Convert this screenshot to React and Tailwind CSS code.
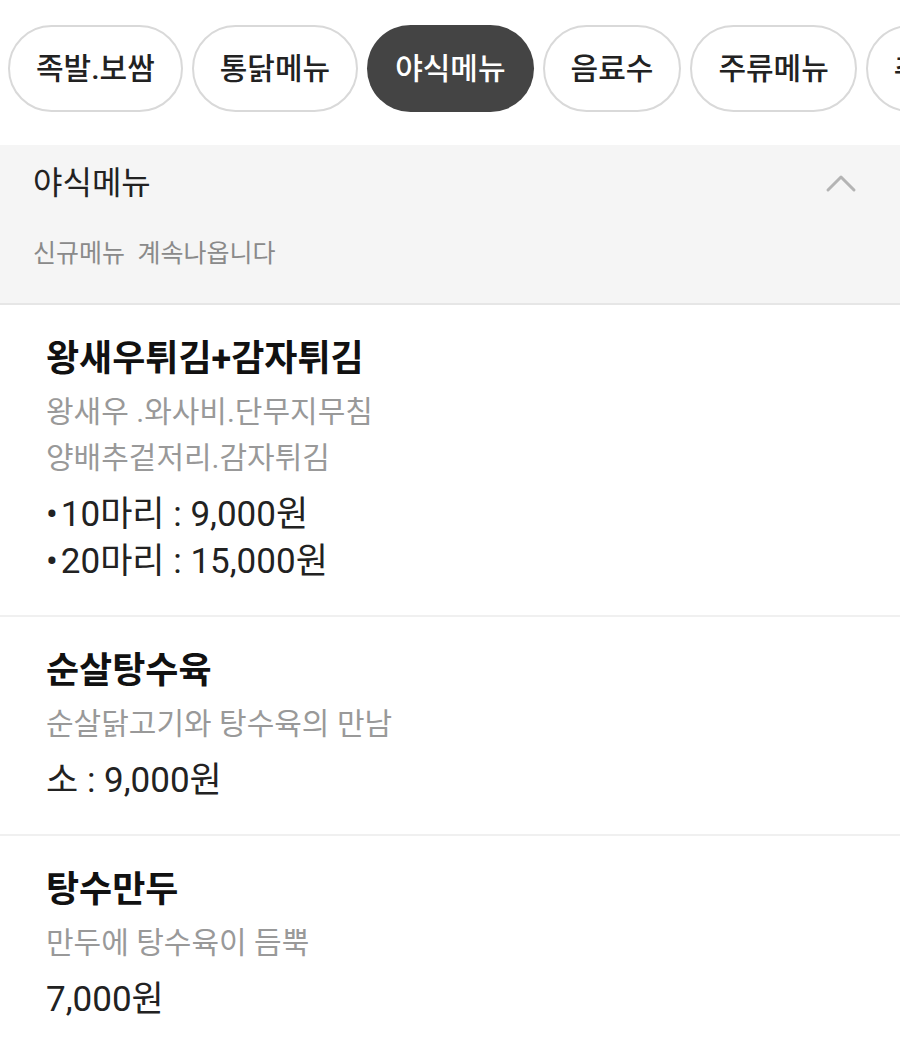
import React from "react";

const font = { fontFamily: "Roboto, 'Noto Sans CJK KR', 'Noto Sans', sans-serif" };

const tabs = ["족발.보쌈", "통닭메뉴", "야식메뉴", "음료수", "주류메뉴", "추가메뉴"];

const items = [
  {
    title: "왕새우튀김+감자튀김",
    desc: ["왕새우 .와사비.단무지무침", "양배추겉저리.감자튀김"],
    prices: [
      { bullet: true, text: "10마리 : 9,000원" },
      { bullet: true, text: "20마리 : 15,000원" },
    ],
  },
  {
    title: "순살탕수육",
    desc: ["순살닭고기와 탕수육의 만남"],
    prices: [{ bullet: false, text: "소 : 9,000원" }],
  },
  {
    title: "탕수만두",
    desc: ["만두에 탕수육이 듬뿍"],
    prices: [{ bullet: false, text: "7,000원" }],
  },
];

export default function App() {
  return (
    <div className="w-[900px] h-[1044px] overflow-hidden bg-white" style={font}>
      <div className="flex gap-[9px] pl-[8px] pt-[25px] pb-[33px] overflow-hidden whitespace-nowrap">
        {tabs.map((t, i) => (
          <div
            key={t}
            className={
              i === 2
                ? "shrink-0 h-[87px] flex items-center px-[28px] rounded-full bg-[#444444] text-white text-[30px] font-medium"
                : "shrink-0 h-[87px] flex items-center px-[26px] rounded-full border-2 border-[#d9d9d9] bg-white text-[#222] text-[30px] font-medium"
            }
          >
            {t}
          </div>
        ))}
      </div>

      <div className="bg-[#f5f5f5] border-b-2 border-[#e6e6e6] pl-[33px] pr-[43px] pt-[20px] pb-[34px]">
        <div className="flex items-center justify-between h-[36px]">
          <span className="text-[32px] leading-[36px] text-[#222]">야식메뉴</span>
          <svg width="32" height="20" viewBox="0 0 32 20" fill="none">
            <polyline points="3,17 16,4 29,17" stroke="#b4b4b4" strokeWidth="3" strokeLinecap="round" strokeLinejoin="round" />
          </svg>
        </div>
        <div className="mt-[38px] text-[25px] leading-[30px] text-[#8a8a8a] whitespace-pre">신규메뉴  계속나옵니다</div>
      </div>

      {items.map((it) => (
        <div key={it.title} className="pl-[46px] pr-[30px] pt-[32px] pb-[30px] border-b-2 border-[#f0f0f0]">
          <div className="text-[36px] leading-[44px] font-bold text-[#111]">{it.title}</div>
          <div className="mt-[8px]">
            {it.desc.map((d) => (
              <div key={d} className="text-[30px] leading-[46px] text-[#999999]">{d}</div>
            ))}
          </div>
          <div className="mt-[10px]">
            {it.prices.map((p) => (
              <div key={p.text} className="text-[35px] leading-[47px] text-[#222]">
                {p.bullet && <span className="mr-[3px]">•</span>}
                {p.text}
              </div>
            ))}
          </div>
        </div>
      ))}
    </div>
  );
}
